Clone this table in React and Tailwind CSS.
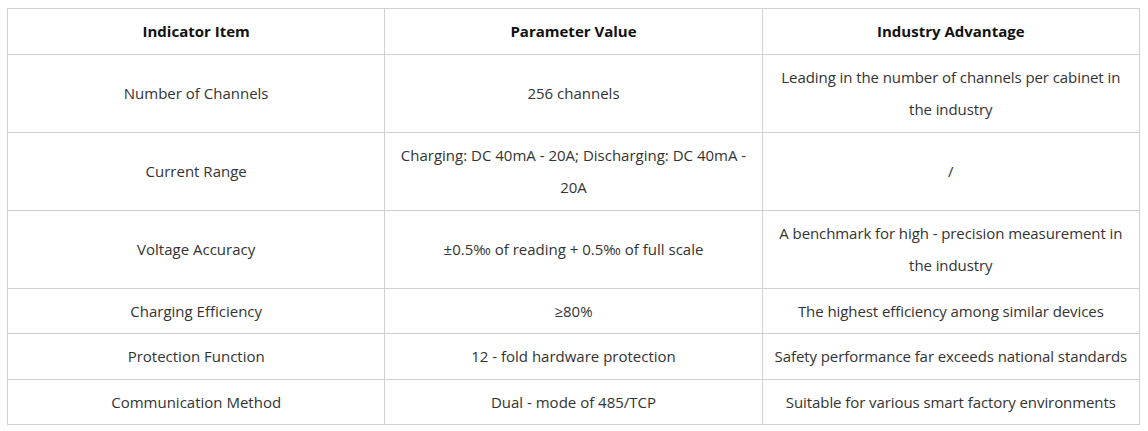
const rows = [
  {
    item: 'Number of Channels',
    value: '256 channels',
    adv: (
      <>
        Leading in the number of channels per cabinet in
        <br />
        the industry
      </>
    ),
  },
  { item: 'Current Range', value: 'Charging: DC 40mA - 20A; Discharging: DC 40mA - 20A', adv: '/' },
  { item: 'Voltage Accuracy', value: '±0.5‰ of reading + 0.5‰ of full scale', adv: 'A benchmark for high - precision measurement in the industry' },
  { item: 'Charging Efficiency', value: '≥80%', adv: 'The highest efficiency among similar devices' },
  { item: 'Protection Function', value: '12 - fold hardware protection', adv: 'Safety performance far exceeds national standards' },
  { item: 'Communication Method', value: 'Dual - mode of 485/TCP', adv: 'Suitable for various smart factory environments' },
];

export default function App() {
  return (
    <div className="bg-white w-[1148px] h-[431px] pl-[7px] pt-[8px] font-['Open_Sans',sans-serif] text-[15px]">
      <table className="w-[1133px] border-collapse table-fixed">
        <thead>
          <tr>
            <th className="border border-[#d0d0d0] px-[6px] py-[6px] leading-[32.5px] font-bold text-[#111]">Indicator Item</th>
            <th className="border border-[#d0d0d0] px-[6px] py-[6px] leading-[32.5px] font-bold text-[#111]">Parameter Value</th>
            <th className="border border-[#d0d0d0] px-[6px] py-[6px] leading-[32.5px] font-bold text-[#111]">Industry Advantage</th>
          </tr>
        </thead>
        <tbody>
          {rows.map((r) => (
            <tr key={r.item}>
              <td className="border border-[#d0d0d0] px-[6px] py-[6px] leading-[32.5px] text-center text-[#333]">{r.item}</td>
              <td className="border border-[#d0d0d0] px-[6px] py-[6px] leading-[32.5px] text-center text-[#333]">{r.value}</td>
              <td className="border border-[#d0d0d0] px-[4px] py-[6px] leading-[32.5px] text-center text-[#333] tracking-[-0.08px]">{r.adv}</td>
            </tr>
          ))}
        </tbody>
      </table>
    </div>
  );
}
